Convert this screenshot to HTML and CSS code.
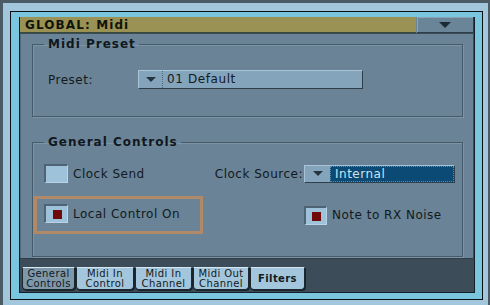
FILE: index.html
```html
<!DOCTYPE html>
<html>
<head>
<meta charset="utf-8">
<link rel="stylesheet" href="styles.css">
</head>
<body>
<div class="frame">
  <div class="rim">
    <div class="window">
      <div class="titlebar">
        <div class="title">GLOBAL: Midi</div>
        <div class="title-btn"><span class="tri"></span></div>
      </div>
      <div class="panel">
        <fieldset class="group group-preset">
          <legend>Midi Preset</legend>
          <div class="row">
            <span class="label preset-label">Preset:</span>
            <div class="combo combo-preset">
              <span class="combo-arrow"><span class="tri small"></span></span>
              <span class="combo-text">01 Default</span>
            </div>
          </div>
        </fieldset>
        <fieldset class="group group-general">
          <legend>General Controls</legend>
          <div class="row row-1">
            <div class="check-item">
              <span class="check"></span>
              <span class="label">Clock Send</span>
            </div>
            <div class="source">
              <span class="label">Clock Source:</span>
              <div class="combo combo-source">
                <span class="combo-arrow"><span class="tri small"></span></span>
                <span class="combo-sel">Internal</span>
              </div>
            </div>
          </div>
          <div class="row row-2">
            <div class="highlight">
              <div class="check-item">
                <span class="check on"><span class="dot"></span></span>
                <span class="label">Local Control On</span>
              </div>
            </div>
            <div class="check-item note">
              <span class="check on"><span class="dot"></span></span>
              <span class="label">Note to RX Noise</span>
            </div>
          </div>
        </fieldset>
      </div>
      <div class="tabs">
        <div class="tab active w1"><span>General</span><span>Controls</span></div>
        <div class="tab w2"><span>Midi In</span><span>Control</span></div>
        <div class="tab w3"><span>Midi In</span><span>Channel</span></div>
        <div class="tab w4"><span>Midi Out</span><span>Channel</span></div>
        <div class="tab w5 single"><span>Filters</span></div>
      </div>
    </div>
  </div>
</div>
</body>
</html>
```
FILE: styles.css
```css
* { box-sizing: border-box; }
html, body { margin: 0; padding: 0; }
body {
  width: 490px;
  height: 305px;
  overflow: hidden;
  background: #4b5b66;
  padding: 3px 2px 0 3px;
  font-family: "DejaVu Sans", sans-serif;
  color: #121a20;
}
.frame {
  background: #a2c6dc;
  height: 310px;
  padding: 8px 5px 5px 7px;
}
.rim {
  border: 1px solid #0a1014;
  background: #7ac6de;
  height: 289px;
  padding: 5px 7px 6px 8px;
}
.window {
  height: 276px;
  border: 1px solid #142028;
  border-top: none;
  display: flex;
  flex-direction: column;
  background: #3c4c58;
}
.titlebar {
  display: flex;
  height: 16px;
  gap: 1px;
  background: #6a8498;
}
.title {
  flex: 1;
  background: #9a9254;
  font-weight: bold;
  font-size: 12px;
  letter-spacing: 1.1px;
  line-height: 16px;
  padding-left: 5px;
  color: #10140c;
  border-bottom: 1px solid #3a4a3a;
}
.title-btn {
  width: 57px;
  background: #6a8498;
  border-right: 1px solid #2e3e4a;
  border-bottom: 1px solid #2e3e4a;
  box-shadow: inset 1px 1px 0 #8aa4b6;
  display: flex;
  align-items: center;
  justify-content: center;
}
.tri {
  width: 0; height: 0;
  border-left: 6px solid transparent;
  border-right: 6px solid transparent;
  border-top: 6px solid #1e2a34;
}
.tri.small {
  border-left-width: 5px;
  border-right-width: 5px;
  border-top-width: 5px;
  border-top-color: #26343e;
}
.panel {
  background: #6a8396;
  height: 226px;
  margin-right: 1px;
  border-top: 1px solid #3a4c58;
  border-bottom: 1px solid #2e3c46;
  box-shadow: inset 1px 0 0 #546a7a;
  padding: 3px 10px 0 12px;
  display: flex;
  flex-direction: column;
}
.group {
  margin: 0;
  border: 1px solid #455a6a;
  box-shadow: 1px 1px 0 #7d94a4, inset 1px 1px 0 #7d94a4;
  padding: 0;
  min-width: 0;
}
.group legend {
  font-weight: bold;
  font-size: 12px;
  letter-spacing: 1px;
  line-height: 14px;
  padding: 0 3px 0 4px;
  color: #10181e;
}
.group-preset {
  height: 80px;
  padding: 19px 10px 0 15px;
}
.group-preset legend { margin-left: -4px; }
.group-general {
  margin-top: 18px;
  height: 122px;
  padding: 15px 7px 0 11px;
}
.group-general legend { margin-left: 0; }
.row {
  display: flex;
  align-items: center;
}
.label {
  font-size: 12px;
  letter-spacing: 0.5px;
  line-height: 16px;
  color: #121a20;
  white-space: nowrap;
}
.preset-label { width: 90px; }
.combo {
  display: flex;
  height: 19px;
  background: #84a4bc;
  border-top: 1px solid #a8c4d6;
  border-left: 1px solid #a8c4d6;
  border-right: 1px solid #2e3e4a;
  border-bottom: 1px solid #2e3e4a;
}
.combo-preset { width: 225px; }
.combo-arrow {
  width: 24px;
  display: flex;
  align-items: center;
  justify-content: center;
  border-right: 1px dotted #4e6678;
}
.combo-text {
  font-size: 12px;
  letter-spacing: 0.6px;
  line-height: 17px;
  padding-left: 4px;
  color: #121a20;
}
.row-1 { height: 19px; justify-content: space-between; }
.check-item {
  display: flex;
  align-items: center;
  gap: 5px;
}
.check {
  width: 24px;
  height: 19px;
  background: #9ec2da;
  border-top: 2px solid #4e6474;
  border-left: 2px solid #4e6474;
  border-right: 1px solid #b8d4e6;
  border-bottom: 1px solid #b8d4e6;
  display: flex;
  align-items: center;
  justify-content: center;
}
.check .dot {
  width: 9px;
  height: 9px;
  background: #6e0a0a;
  margin: 1px 0 0 1px;
}
.source {
  display: flex;
  align-items: center;
  gap: 1px;
}
.combo-source {
  width: 151px;
  height: 18px;
}
.combo-source .combo-arrow { width: 25px; border-right: none; }
.combo-sel {
  flex: 1;
  background: #0b4a74;
  color: #cfe2ee;
  font-size: 12px;
  letter-spacing: 0.5px;
  line-height: 14px;
  padding-left: 4px;
  border: 1px dotted #5f8aa8;
}
.row-2 {
  margin-top: 13px;
  align-items: center;
}
.highlight {
  margin-left: -10px;
  width: 169px;
  height: 38px;
  border: 3px solid #b08a68;
  padding: 5px 0 0 7px;
}
.note { margin-left: 101px; }
.note .check { width: 23px; }
.tabs {
  flex: 1;
  display: flex;
  gap: 1px;
  padding: 8px 0 0 2px;
  align-items: flex-start;
}
.tab {
  height: 23px;
  background: #a4c6dc;
  border: 1px solid #1c2830;
  border-top-color: #d4e6f0;
  border-radius: 0 0 4px 4px;
  box-shadow: 1px 1px 0 #1a242c;
  font-size: 10px;
  letter-spacing: 0.4px;
  text-align: center;
  color: #121a20;
  display: flex;
  flex-direction: column;
  align-items: center;
  justify-content: center;
  overflow: hidden;
}
.tab span { display: block; line-height: 10px; height: 10px; }
.tab.active { background: #7e98aa; }
.tab.single span { font-weight: bold; line-height: 12px; height: 12px; }
.w1 { width: 53px; }
.w2 { width: 58px; }
.w3 { width: 57px; }
.w4 { width: 56px; }
.w5 { width: 55px; }
```
